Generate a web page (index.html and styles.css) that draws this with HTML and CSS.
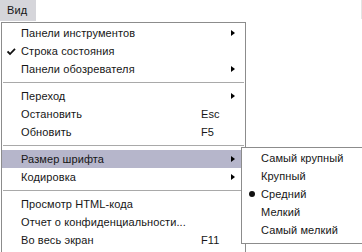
FILE: index.html
```html
<!DOCTYPE html>
<html>
<head>
<meta charset="utf-8">
<link rel="stylesheet" href="styles.css">
</head>
<body>
<div class="menubar">
  <div class="top-item">Вид</div>
  <div class="edge"></div>
</div>
<div class="menu">
  <div class="row"><span class="mark"></span><span class="label">Панели инструментов</span><span class="key"></span><span class="arrow"></span></div>
  <div class="row"><span class="mark"><svg width="9" height="8" viewBox="0 0 9 8"><path d="M0.5 3.5 L3 6 L8 0.8" fill="none" stroke="#111" stroke-width="1.8"/></svg></span><span class="label">Строка состояния</span><span class="key"></span><span class="noarrow"></span></div>
  <div class="row"><span class="mark"></span><span class="label">Панели обозревателя</span><span class="key"></span><span class="arrow"></span></div>
  <div class="sep"></div>
  <div class="row"><span class="mark"></span><span class="label">Переход</span><span class="key"></span><span class="arrow"></span></div>
  <div class="row"><span class="mark"></span><span class="label">Остановить</span><span class="key">Esc</span><span class="noarrow"></span></div>
  <div class="row"><span class="mark"></span><span class="label">Обновить</span><span class="key">F5</span><span class="noarrow"></span></div>
  <div class="sep"></div>
  <div class="row active"><span class="mark"></span><span class="label">Размер шрифта</span><span class="key"></span><span class="arrow"></span>
    <div class="submenu">
      <div class="srow"><span class="smark"></span><span>Самый крупный</span></div>
      <div class="srow"><span class="smark"></span><span>Крупный</span></div>
      <div class="srow"><span class="smark"><span class="dot"></span></span><span>Средний</span></div>
      <div class="srow"><span class="smark"></span><span>Мелкий</span></div>
      <div class="srow"><span class="smark"></span><span>Самый мелкий</span></div>
    </div>
  </div>
  <div class="row"><span class="mark"></span><span class="label">Кодировка</span><span class="key"></span><span class="arrow"></span></div>
  <div class="sep"></div>
  <div class="row"><span class="mark"></span><span class="label">Просмотр HTML-кода</span><span class="key"></span><span class="noarrow"></span></div>
  <div class="row"><span class="mark"></span><span class="label">Отчет о конфиденциальности...</span><span class="key"></span><span class="noarrow"></span></div>
  <div class="row"><span class="mark"></span><span class="label">Во весь экран</span><span class="key">F11</span><span class="noarrow"></span></div>
</div>
</body>
</html>
```
FILE: styles.css
```css
html, body {
  margin: 0;
  padding: 0;
  background: #ffffff;
  width: 362px;
  height: 252px;
  overflow: hidden;
  font-family: "Liberation Sans", Arial, sans-serif;
  font-size: 11px;
  letter-spacing: 0.1px;
  color: #161616;
  white-space: nowrap;
}
.menubar {
  display: flex;
  height: 21px;
  margin-bottom: 1px;
}
.top-item {
  width: 36px;
  height: 21px;
  background: #d5d5da;
  box-sizing: border-box;
  padding-left: 7px;
  line-height: 21px;
}
.edge {
  margin-left: auto;
  width: 1px;
  height: 19px;
  background: #e4e4e4;
}
.menu {
  position: relative;
  margin-left: 1px;
  width: 245px;
  height: 240px;
  box-sizing: border-box;
  border: 1px solid #8c8c8c;
  border-bottom: none;
  padding-top: 1px;
  background: #fff;
}
.row {
  position: relative;
  display: flex;
  align-items: center;
  height: 18px;
}
.row.active {
  background: #b6b6cb;
}
.mark {
  width: 19px;
  display: flex;
  justify-content: center;
  padding-top: 1px;
}
.label {
  flex: 1;
}
.key {
  width: 30px;
}
.arrow {
  width: 0;
  height: 0;
  border-left: 4px solid #000;
  border-top: 3.5px solid transparent;
  border-bottom: 3.5px solid transparent;
  margin-right: 10px;
}
.noarrow {
  width: 4px;
  margin-right: 10px;
}
.sep {
  height: 9px;
  display: flex;
  align-items: center;
}
.sep::before {
  content: "";
  flex: 1;
  height: 1px;
  margin: 0 1px;
  background: #a9a9a9;
}
.submenu {
  position: absolute;
  left: 239px;
  top: -3px;
  width: 130px;
  box-sizing: border-box;
  border: 1px solid #8c8c8c;
  padding: 1px 0 4px;
  background: #fff;
  z-index: 2;
}
.srow {
  display: flex;
  align-items: center;
  height: 18px;
}
.smark {
  width: 19px;
  display: flex;
  justify-content: center;
}
.dot {
  width: 6px;
  height: 6px;
  border-radius: 50%;
  background: #111;
}
```
